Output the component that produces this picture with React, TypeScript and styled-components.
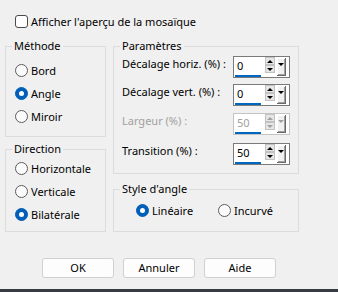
import React from "react";
import styled, { createGlobalStyle } from "styled-components";

const Global = createGlobalStyle`
  html, body { margin: 0; padding: 0; background: #f0f0f0; }
  body { font-family: "Noto Sans", "DejaVu Sans", sans-serif; font-size: 11px; color: #000; }
`;

const Page = styled.div`
  width: 338px;
  height: 292px;
  background: #f0f0f0;
  display: flex;
  flex-direction: column;
  overflow: hidden;
`;

const TopRow = styled.label`
  display: flex;
  align-items: center;
  gap: 3px;
  height: 13px;
  margin: 15px 0 0 15px;
  line-height: 16px;
`;

const CheckBox = styled.span`
  box-sizing: border-box;
  width: 13px;
  height: 13px;
  border: 1px solid #4a4a4a;
  border-radius: 3px;
  background: #fff;
  flex: none;
`;

const Main = styled.div`
  display: grid;
  grid-template-columns: 101px 186px;
  column-gap: 7px;
  margin: 10px 0 0 5px;
`;

const Column = styled.div<{ $gap: number }>`
  display: flex;
  flex-direction: column;
  gap: ${(p) => p.$gap}px;
`;

const Group = styled.fieldset<{ $h: number }>`
  box-sizing: border-box;
  margin: 0;
  padding: 0;
  min-width: 0;
  height: ${(p) => p.$h}px;
  border: 1px solid #dcdcdc;
`;

const Legend = styled.legend`
  padding: 0 2px;
  margin-left: 6px;
  line-height: 16px;
`;

const Body = styled.div<{ $pt: number; $pl: number; $pr?: number }>`
  padding: ${(p) => p.$pt}px ${(p) => p.$pr ?? 0}px 0 ${(p) => p.$pl}px;
`;

const RadioList = styled.div<{ $row?: boolean }>`
  display: flex;
  flex-direction: ${(p) => (p.$row ? "row" : "column")};
`;

const RadioItem = styled.label<{ $w?: number }>`
  display: flex;
  align-items: center;
  gap: 3px;
  height: 23px;
  line-height: 16px;
  width: ${(p) => (p.$w ? `${p.$w}px` : "auto")};
`;

const Circle = styled.span<{ $on?: boolean }>`
  box-sizing: border-box;
  width: 13px;
  height: 13px;
  border-radius: 50%;
  flex: none;
  display: flex;
  align-items: center;
  justify-content: center;
  background: ${(p) => (p.$on ? "#005fb8" : "#fbfbfb")};
  border: 1px solid ${(p) => (p.$on ? "#005fb8" : "#5c5c5c")};
  &::after {
    content: "";
    display: ${(p) => (p.$on ? "block" : "none")};
    width: 5px;
    height: 5px;
    border-radius: 50%;
    background: #fff;
  }
`;

const ParamRow = styled.div<{ $mt: number }>`
  display: grid;
  grid-template-columns: 1fr 57px;
  height: 22px;
  margin-top: ${(p) => p.$mt}px;
`;

const ParamLabel = styled.span<{ $disabled?: boolean }>`
  line-height: 16px;
  color: ${(p) => (p.$disabled ? "#a0a0a0" : "#000")};
`;

const SpinBox = styled.div<{ $disabled?: boolean }>`
  box-sizing: border-box;
  width: 57px;
  height: 22px;
  border: 1px solid ${(p) => (p.$disabled ? "#c4c4c4" : "#7a7a7a")};
  background: #fff;
  display: flex;
  padding-right: 2px;
`;

const Edit = styled.div<{ $disabled?: boolean }>`
  width: 30px;
  margin-right: 1px;
  box-sizing: border-box;
  padding: 1px 0 0 3px;
  display: flex;
  flex-direction: column;
  color: ${(p) => (p.$disabled ? "#a0a0a0" : "#000")};
`;

const Value = styled.span`
  line-height: 16px;
  height: 17px;
`;

const Underline = styled.span`
  display: block;
  width: 26px;
  height: 2px;
  margin-left: -2px;
  background: #0067c0;
`;

const Arrows = styled.div`
  display: flex;
  flex-direction: column;
  width: 10px;
`;

const ArrowCell = styled.span<{ $disabled?: boolean }>`
  box-sizing: border-box;
  height: 8px;
  border: 1px solid #c2c2c2;
  background: #e6e6e6;
  display: flex;
  align-items: center;
  justify-content: center;
`;

const Tri = styled.span<{ $down?: boolean; $disabled?: boolean }>`
  width: 0;
  height: 0;
  border-left: 3px solid transparent;
  border-right: 3px solid transparent;
  ${(p) =>
    p.$down
      ? `border-top: 3px solid ${p.$disabled ? "#a0a0a0" : "#000"};`
      : `border-bottom: 3px solid ${p.$disabled ? "#a0a0a0" : "#000"};`}
`;

const Drop = styled.div`
  box-sizing: border-box;
  width: 9px;
  height: 18px;
  margin: 1px 0 0 2px;
  background: #f0f0f0;
  border-right: 1px solid #696969;
  border-bottom: 1px solid #696969;
  box-shadow: inset 1px 1px #ffffff, inset -1px -1px #a0a0a0;
  display: flex;
  justify-content: center;
  padding-top: 5px;
`;

const Buttons = styled.div`
  display: flex;
  gap: 9px;
  margin: 26px 0 0 42px;
`;

const Btn = styled.button`
  box-sizing: border-box;
  width: 72px;
  height: 20px;
  padding: 0;
  border: 1px solid #d0d0d0;
  border-radius: 3px;
  background: #fdfdfd;
  font: inherit;
  color: #000;
  line-height: 18px;
`;

const BottomBar = styled.div`
  margin-top: auto;
  height: 3px;
  background: #363c42;
`;

function Radio({ label, on, w }: { label: string; on?: boolean; w?: number }) {
  return (
    <RadioItem $w={w}>
      <Circle $on={on} />
      <span>{label}</span>
    </RadioItem>
  );
}

function Spin({ value, disabled }: { value: string; disabled?: boolean }) {
  return (
    <SpinBox $disabled={disabled}>
      <Edit $disabled={disabled}>
        <Value>{value}</Value>
        <Underline />
      </Edit>
      <Arrows>
        <ArrowCell>
          <Tri $disabled={disabled} />
        </ArrowCell>
        <ArrowCell>
          <Tri $down $disabled={disabled} />
        </ArrowCell>
      </Arrows>
      <Drop>
        <Tri $down $disabled={disabled} />
      </Drop>
    </SpinBox>
  );
}

const params = [
  { label: "Décalage horiz. (%) :", value: "0", mt: 2 },
  { label: "Décalage vert. (%) :", value: "0", mt: 6 },
  { label: "Largeur (%) :", value: "50", mt: 7, disabled: true },
  { label: "Transition (%) :", value: "50", mt: 8 },
];

export default function App() {
  return (
    <Page>
      <Global />
      <TopRow>
        <CheckBox />
        <span>Afficher l'aperçu de la mosaïque</span>
      </TopRow>
      <Main>
        <Column $gap={4}>
          <Group $h={99}>
            <Legend>Méthode</Legend>
            <Body $pt={5} $pl={9}>
              <RadioList>
                <Radio label="Bord" />
                <Radio label="Angle" on />
                <Radio label="Miroir" />
              </RadioList>
            </Body>
          </Group>
          <Group $h={91}>
            <Legend>Direction</Legend>
            <Body $pt={0} $pl={9}>
              <RadioList>
                <Radio label="Horizontale" />
                <Radio label="Verticale" />
                <Radio label="Bilatérale" on />
              </RadioList>
            </Body>
          </Group>
        </Column>
        <Column $gap={7}>
          <Group $h={136}>
            <Legend>Paramètres</Legend>
            <Body $pt={0} $pl={8} $pr={8}>
              {params.map((p) => (
                <ParamRow key={p.label} $mt={p.mt}>
                  <ParamLabel $disabled={p.disabled}>{p.label}</ParamLabel>
                  <Spin value={p.value} disabled={p.disabled} />
                </ParamRow>
              ))}
            </Body>
          </Group>
          <Group $h={51}>
            <Legend>Style d'angle</Legend>
            <Body $pt={2} $pl={22}>
              <RadioList $row>
                <Radio label="Linéaire" on w={82} />
                <Radio label="Incurvé" />
              </RadioList>
            </Body>
          </Group>
        </Column>
      </Main>
      <Buttons>
        <Btn>OK</Btn>
        <Btn>Annuler</Btn>
        <Btn>Aide</Btn>
      </Buttons>
      <BottomBar />
    </Page>
  );
}
